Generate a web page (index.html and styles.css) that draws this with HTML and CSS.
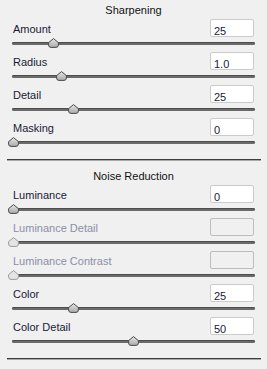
FILE: index.html
```html
<!DOCTYPE html>
<html lang="en">
<head>
  <meta charset="UTF-8">
  <title>Detail</title>
  <link rel="stylesheet" href="styles.css">
</head>
<body>
  <svg class="defs" width="0" height="0">
    <defs>
      <linearGradient id="thumbFill" x1="0" y1="0" x2="0" y2="1">
        <stop offset="0" stop-color="#e6e6e6"/>
        <stop offset="1" stop-color="#a9a9a9"/>
      </linearGradient>
      <symbol id="thumb" viewBox="0 0 11 10">
        <path d="M5.5 0.6 L10.4 4.6 V7 Q10.4 9.4 8 9.4 H3 Q0.6 9.4 0.6 7 V4.6 Z"/>
      </symbol>
    </defs>
  </svg>

  <div class="panel">
    <div class="section">
      <div class="title first">Sharpening</div>

      <div class="row">
        <div class="head"><label>Amount</label><input type="text" value="25"></div>
        <div class="slider"><div class="track"></div><svg class="thumb" style="--v:0.1667"><use href="#thumb"/></svg></div>
      </div>
      <div class="row">
        <div class="head"><label>Radius</label><input type="text" value="1.0"></div>
        <div class="slider"><div class="track"></div><svg class="thumb" style="--v:0.2"><use href="#thumb"/></svg></div>
      </div>
      <div class="row">
        <div class="head"><label>Detail</label><input type="text" value="25"></div>
        <div class="slider"><div class="track"></div><svg class="thumb" style="--v:0.25"><use href="#thumb"/></svg></div>
      </div>
      <div class="row">
        <div class="head"><label>Masking</label><input type="text" value="0"></div>
        <div class="slider"><div class="track"></div><svg class="thumb" style="--v:0"><use href="#thumb"/></svg></div>
      </div>
      <div class="rule"></div>
    </div>

    <div class="section">
      <div class="title">Noise Reduction</div>

      <div class="row">
        <div class="head"><label>Luminance</label><input type="text" value="0"></div>
        <div class="slider"><div class="track"></div><svg class="thumb" style="--v:0"><use href="#thumb"/></svg></div>
      </div>
      <div class="row disabled">
        <div class="head"><label>Luminance Detail</label><input type="text" value="" disabled></div>
        <div class="slider"><div class="track"></div><svg class="thumb" style="--v:0"><use href="#thumb"/></svg></div>
      </div>
      <div class="row disabled">
        <div class="head"><label>Luminance Contrast</label><input type="text" value="" disabled></div>
        <div class="slider"><div class="track"></div><svg class="thumb" style="--v:0"><use href="#thumb"/></svg></div>
      </div>
      <div class="row">
        <div class="head"><label>Color</label><input type="text" value="25"></div>
        <div class="slider"><div class="track"></div><svg class="thumb" style="--v:0.25"><use href="#thumb"/></svg></div>
      </div>
      <div class="row">
        <div class="head"><label>Color Detail</label><input type="text" value="50"></div>
        <div class="slider"><div class="track"></div><svg class="thumb" style="--v:0.5"><use href="#thumb"/></svg></div>
      </div>
      <div class="rule"></div>
    </div>
  </div>
</body>
</html>
```

FILE: styles.css
```css
body {
  margin: 0;
  background: #f0f0f0;
  font-family: "Liberation Sans", Arial, sans-serif;
  font-size: 11px;
  color: #1a1a36;
}
.defs {
  position: absolute;
}
.panel {
  width: 267px;
  height: 369px;
  padding: 0 12px;
  box-sizing: border-box;
  overflow: hidden;
}
.title {
  text-align: center;
  line-height: 13px;
  padding-top: 9px;
  margin-bottom: 2px;
  color: #111;
}
.title.first {
  padding-top: 4px;
}
.row {
  height: 33px;
}
.head {
  display: flex;
  justify-content: space-between;
  align-items: flex-end;
  height: 18px;
}
.head label {
  line-height: 13px;
  margin-bottom: 1px;
  padding-left: 1px;
}
.head input {
  width: 44px;
  height: 18px;
  box-sizing: border-box;
  margin: 0 1px 0 0;
  padding: 5px 3px 0;
  border: 1px solid #cbcbcb;
  border-radius: 2px;
  background: #fff;
  font-family: "Liberation Sans", Arial, sans-serif;
  font-size: 11px;
  color: #1a1a36;
  outline: none;
}
.slider {
  position: relative;
  height: 15px;
}
.track {
  position: absolute;
  left: 0;
  right: 0;
  top: 5px;
  height: 3px;
  background: #6a6a6a;
  border-radius: 2px;
  box-shadow: inset 0 1px 0 #4c4c4c;
}
.thumb {
  position: absolute;
  top: 1px;
  left: calc(var(--v) * 241px - 4.5px);
  width: 11px;
  height: 10px;
  fill: url(#thumbFill);
  stroke: #4a4a4a;
  stroke-width: 1;
}
.disabled label {
  color: #8b8fa8;
}
.disabled .head input {
  background: #f0f0f0;
  border-color: #bdbdbd;
}
.disabled .thumb {
  fill: #e4e4e4;
  stroke: #9c9c9c;
}
.rule {
  margin: 8px -6px 0 -5px;
  height: 1px;
  border-top: 1px solid #3e3e3e;
  background: #a8a8a8;
}
```
